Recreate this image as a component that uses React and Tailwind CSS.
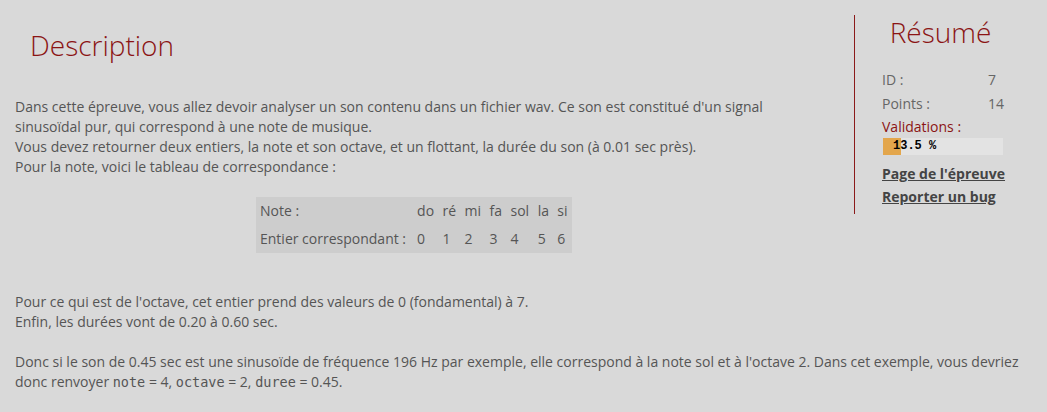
import React from 'react';

const notes = ['do', 'ré', 'mi', 'fa', 'sol', 'la', 'si'];

function Summary() {
  return (
    <aside className="float-right ml-[41px] mr-[6px] w-[172px] h-[199px] border-l border-[#8b1a1a]">
      <h2 className="text-center text-[28px] leading-[34px] font-light text-[#8b1414]">Résumé</h2>
      <div className="pl-[27px] pt-[19px]">
        <div className="flex h-[24px] items-center text-[#666]">
          <span className="w-[106px]">ID :</span>
          <span>7</span>
        </div>
        <div className="flex h-[24px] items-center text-[#666]">
          <span className="w-[106px]">Points :</span>
          <span>14</span>
        </div>
        <div className="h-[22px] leading-[22px] text-[#8b1414]">Validations :</div>
        <div className="relative ml-[1px] h-[17px] w-[120px] bg-[#e3e3e3]">
          <div className="h-full w-[18px] bg-[#e3a64c]"></div>
          <span className="absolute left-[10px] top-0 font-['Liberation_Mono',monospace] text-[12px] font-bold leading-[17px] text-black">13.5 %</span>
        </div>
        <a href="#" className="mt-[8px] block font-bold leading-[22px] text-[#444] underline">Page de l'épreuve</a>
        <a href="#" className="mt-[1px] block font-bold leading-[22px] text-[#444] underline">Reporter un bug</a>
      </div>
    </aside>
  );
}

export default function App() {
  const code = "font-['DejaVu_Sans_Mono',monospace] text-[13.5px]";
  return (
    <div className="min-h-screen bg-[#d9d9d9] px-[15px] pt-[15px] font-['Open_Sans',sans-serif] text-[14px] leading-[20px] text-[#555]">
      <Summary />
      <h1 className="ml-[15px] mt-[13px] text-[28px] leading-[34px] font-light text-[#8b1414]">Description</h1>

      <p className="mt-[35px]">
        Dans cette épreuve, vous allez devoir analyser un son contenu dans un fichier wav. Ce son est constitué d'un signal
        sinusoïdal pur, qui correspond à une note de musique.
        <br />
        Vous devez retourner deux entiers, la note et son octave, et un flottant, la durée du son (à 0.01 sec près).
        <br />
        Pour la note, voici le tableau de correspondance :
      </p>

      <table className="mx-auto mt-[20px] w-[316px] bg-[#cdcdcd]">
        <tbody>
          <tr>
            <td className="px-[4px] py-[4px]">Note :</td>
            {notes.map((n) => (
              <td key={n} className="px-[4px] py-[4px]">{n}</td>
            ))}
          </tr>
          <tr>
            <td className="px-[4px] py-[4px]">Entier correspondant :</td>
            {notes.map((n, i) => (
              <td key={n} className="px-[4px] py-[4px]">{i}</td>
            ))}
          </tr>
        </tbody>
      </table>

      <p className="mt-[39px]">
        Pour ce qui est de l'octave, cet entier prend des valeurs de 0 (fondamental) à 7.
        <br />
        Enfin, les durées vont de 0.20 à 0.60 sec.
      </p>

      <p className="mt-[20px] pb-[20px]">
        Donc si le son de 0.45 sec est une sinusoïde de fréquence 196 Hz par exemple, elle correspond à la note sol et à l'octave 2. Dans cet exemple, vous devriez
        donc renvoyer <code className={code}>note</code> = 4, <code className={code}>octave</code> = 2, <code className={code}>duree</code> = 0.45.
      </p>
    </div>
  );
}
